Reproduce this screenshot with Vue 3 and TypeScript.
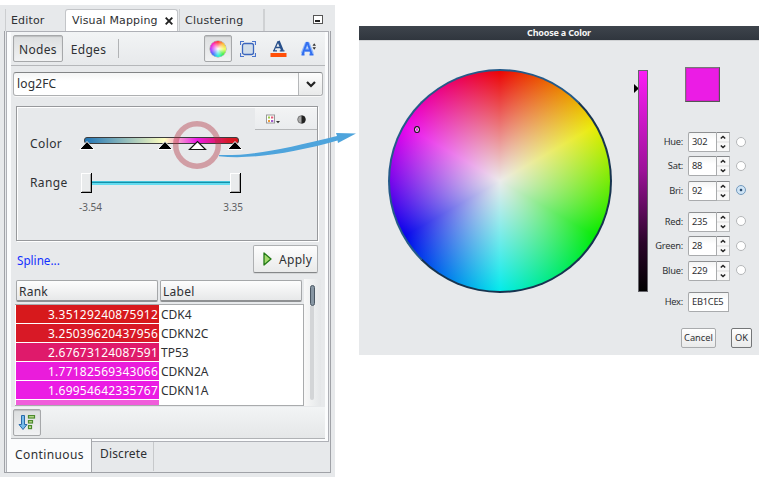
<script setup lang="ts">
import { ref } from 'vue'

interface Row { rank: string; label: string; color: string }
interface Channel { name: string; value: number; gap?: boolean }

const tabs = ['Editor', 'Visual Mapping', 'Clustering']
const activeTab = ref('Visual Mapping')
const column = ref('log2FC')
const selected = ref('Bri')

const rows: Row[] = [
  { rank: '3.35129240875912', label: 'CDK4', color: '#d7191c' },
  { rank: '3.25039620437956', label: 'CDKN2C', color: '#d81926' },
  { rank: '2.67673124087591', label: 'TP53', color: '#df1a6b' },
  { rank: '1.77182569343066', label: 'CDKN2A', color: '#ea1cdb' },
  { rank: '1.69954642335767', label: 'CDKN1A', color: '#eb1ce4' },
  { rank: '', label: '', color: '#f05edb' },
]

const channels: Channel[] = [
  { name: 'Hue', value: 302 },
  { name: 'Sat', value: 88 },
  { name: 'Bri', value: 92 },
  { name: 'Red', value: 235, gap: true },
  { name: 'Green', value: 28 },
  { name: 'Blue', value: 229 },
]
</script>

<template>
  <div class="page">
    <section class="window">
      <nav class="tabs">
        <div v-for="t in tabs" :key="t" class="tab" :class="[t.split(' ')[0].toLowerCase(), { active: t === activeTab }]" @click="activeTab = t">
          <span>{{ t }}</span>
          <svg v-if="t === activeTab" width="8" height="8" viewBox="0 0 8 8"><path d="M.7.7L7.300 7.300M7.300.7L.7 7.300" stroke="#222" stroke-width="1.900" /></svg>
        </div>
        <svg class="minimize" width="10" height="9" viewBox="0 0 10 9"><rect x=".5" y=".5" width="9" height="8" fill="#fff" stroke="#555" /><rect x="2" y="5" width="5" height="2" fill="#222" /></svg>
      </nav>
      <div class="frame">
        <div class="panel">
          <header class="toolbar">
            <button class="tool text pressed nodes">Nodes</button>
            <button class="tool text edges">Edges</button>
            <i class="sep"></i>
            <div class="icons">
              <button class="tool pressed"><i class="mini-wheel"></i></button>
              <button class="tool">
                <svg width="16" height="16" viewBox="0 0 16 16">
                  <rect x="2.5" y="2.5" width="11" height="11" rx="2" fill="#d2deea" stroke="#3b66bd" stroke-width="1.3" />
                  <path d="M.5 4V.5H4M12 .5h3.500V4M15.500 12v3.500H12M4 15.500H.5V12" fill="none" stroke="#4a75cd" stroke-width="1.2" />
                </svg>
              </button>
              <button class="tool">
                <svg width="17" height="17" viewBox="0 0 17 17">
                  <path d="M4 10.500L8 1.500M6 7.500H11M3 10.800h4M9.800 10.800h4.700" fill="none" stroke="#28508b" stroke-width="1.300" /><path d="M8.500 1l4 9.800" stroke="#28508b" stroke-width="2.500" />
                  <rect x=".5" y="13" width="16" height="4" fill="#ff4f08" />
                </svg>
              </button>
              <button class="tool">
                <svg width="17" height="16" viewBox="0 0 17 16">
                  <path d="M2.500 12.500L6.500 2.500h1.500l4 10M4.500 9h6.500" fill="none" stroke="#8eb7fb" stroke-width="3.500" stroke-linejoin="round" />
                  <path d="M1.500 13.500h3M2.700 13L6.800 2h.8l4 11M9.500 13.500h4M5 9.500h5" fill="none" stroke="#326ff0" stroke-width="1.900" />
                  <path d="M12.500 4.800h3.500L14.200 2.300zM12.500 6.200h3.500l-1.800 2.500z" fill="#333" />
                </svg>
              </button>
            </div>
          </header>

          <div class="content">
            <div class="combo">
              <span>{{ column }}</span>
              <b><svg width="10" height="7" viewBox="0 0 10 7"><path d="M1 1l4 4 4-4" fill="none" stroke="#222" stroke-width="2.200" /></svg></b>
            </div>

            <div class="mapping">
              <div class="mini-bar">
                <svg width="15" height="11" viewBox="0 0 15 11">
                  <rect x=".5" y="1" width="8" height="8" fill="#fff" stroke="#999" />
                  <rect x="2" y="2.500" width="2" height="2" fill="#9c4" /><rect x="5" y="2.500" width="2.300" height="2" fill="#e45a78" />
                  <rect x="2" y="6" width="2" height="2" fill="#ed9a3c" /><rect x="5" y="6" width="2.300" height="2" fill="#a35dce" />
                  <path d="M10 7h4L12 9.300z" fill="#333" />
                </svg>
                <svg width="9" height="9" viewBox="0 0 9 9"><circle cx="4.500" cy="4.500" r="3.800" fill="#aaa" stroke="#777" /><path d="M4.500.5a4 4 0 0 1 0 8z" fill="#222" /></svg>
              </div>
              <div class="line color-line">
                <label>Color</label>
                <svg width="170" height="20" viewBox="78 132 170 20">
                  <defs>
                    <linearGradient id="scale"><stop offset="0" stop-color="#1f74b6" /><stop offset=".52" stop-color="#ffffbf" /><stop offset=".73" stop-color="#eb1ce5" /><stop offset=".93" stop-color="#d7192c" /><stop offset="1" stop-color="#d7191c" /></linearGradient>
                  </defs>
                  <rect x="84.500" y="137.500" width="154" height="6" rx="2.500" fill="url(#scale)" stroke="#3d3d3d" />
                  <g fill="#000" stroke="#fff">
                    <path d="M79.500 149.500h15L87 141.500z" /><path d="M157.500 149.500h15L165 141.500z" /><path d="M227.500 149.500h15L235 141.500z" />
                  </g>
                  <path d="M189.500 149.500h16L197.500 141.500z" fill="#fff" stroke="#111" stroke-width="1.200" />
                </svg>
              </div>
              <div class="line range-line">
                <label>Range</label>
                <svg width="170" height="24" viewBox="78 171 170 24" shape-rendering="crispEdges">
                  <rect x="92" y="181" width="138" height="4" fill="#63dcf0" /><rect x="92" y="182" width="138" height="1" fill="#168fa8" /><rect x="92" y="181" width="138" height="1" fill="#45c5dc" />
                  <g v-for="x in [81, 230]" :key="x">
                    <rect :x="x" y="173" width="11" height="20" fill="#000" /><rect :x="x" y="173" width="10" height="19" fill="#fff" /><rect :x="x + 1" y="174" width="9" height="18" fill="#aaa" /><rect :x="x + 1" y="174" width="8" height="17" fill="#e9ebec" />
                  </g>
                </svg>
              </div>
              <div class="limits"><span>-3.54</span><span>3.35</span></div>
              <svg class="ring" width="50" height="50" viewBox="0 0 50 50"><circle cx="25" cy="25" r="21.300" fill="none" stroke="#b22d3c" stroke-opacity=".4" stroke-width="5.500" /></svg>
            </div>

            <div class="actions">
              <a>Spline...</a>
              <button class="apply">
                <svg width="9" height="14" viewBox="0 0 9 14"><path d="M1 1v12l7-6z" fill="#a4d96e" stroke="#237a16" stroke-width="1.300" stroke-linejoin="round" /></svg>
                <span>Apply</span>
              </button>
            </div>

            <div class="table-area">
              <div class="table">
                <div class="thead"><div>Rank</div><div>Label</div></div>
                <div class="tbody">
                  <div v-for="(r, i) in rows" :key="i" class="row">
                    <span class="rank" :style="{ background: r.color }">{{ r.rank }}</span><span class="name">{{ r.label }}</span>
                  </div>
                </div>
              </div>
              <div class="scroll"><i></i></div>
            </div>
          </div>

          <footer class="bottom-bar">
            <button class="tool pressed sort">
              <svg width="18" height="18" viewBox="0 0 18 18">
                <path d="M3.500 1.500h3v9h2.500L5 15.500 1 10.500h2.500z" fill="#76bce9" stroke="#286aaa" stroke-linejoin="round" />
                <g fill="#c9e59b" stroke="#4b8a2d" stroke-width="1.200"><rect x="10.500" y="1.600" width="6" height="2.400" /><rect x="10.500" y="6.600" width="4" height="2.400" /><rect x="10.500" y="11.600" width="3" height="3" /></g>
              </svg>
            </button>
          </footer>
        </div>
        <div class="bottom-tabs"><div class="current">Continuous</div><div class="other">Discrete</div></div>
      </div>
    </section>

    <section class="dialog">
      <h1>Choose a Color</h1>
      <div class="chooser">
        <div class="wheel"><i class="cursor"></i></div>
        <div class="brightness">
          <svg width="5" height="9" viewBox="0 0 5 9"><path d="M0 0v9l4.800-4.500z" fill="#000" /></svg>
          <i></i>
        </div>
        <div class="side">
          <div class="swatch"></div>
          <div v-for="c in channels" :key="c.name" class="channel" :class="{ gap: c.gap }">
            <label>{{ c.name }}:</label>
            <span class="value">{{ c.value }}</span>
            <span class="spin">
              <svg width="12" height="20" viewBox="0 0 12 20"><path d="M0 10h12" stroke="#ddd" /><path d="M3.800 6.500L6 4.500l2.200 2M3.800 13.500L6 15.500l2.200-2" fill="none" stroke="#222" stroke-width="1.500" /></svg>
            </span>
            <i class="radio" :class="{ on: c.name === selected }" @click="selected = c.name"></i>
          </div>
          <div class="channel hex"><label>Hex:</label><span class="value">EB1CE5</span></div>
          <div class="buttons"><button class="cancel">Cancel</button><button class="ok">OK</button></div>
        </div>
      </div>
    </section>

    <svg class="arrow" width="144" height="34" viewBox="216 128 144 34">
      <path d="M219 155C250 156 285 149 337 136L336 133 356 133.500 338 143 337.500 140.500C295 152.500 251 160 219 156.200z" fill="#4ea4dc" />
    </svg>
  </div>
</template>

<style>
body { background: #fff; }
</style>

<style scoped>
* { box-sizing: border-box; }
.page { position: relative; display: flex; width: 765px; height: 477px; overflow: hidden; background: #fff; color: #2e3033; font: 12px/16px "Noto Sans", "Open Sans", sans-serif; }
button { font: inherit; color: inherit; padding: 0; margin: 0; border: 0; background: none; }
svg { display: block; flex: none; }
.window { flex: none; width: 335px; height: 472px; margin-top: 5px; padding: 4px; background: #e7e9eb; }
.tabs { display: flex; height: 22px; font: 11px/22px "DejaVu Sans", sans-serif; letter-spacing: .15px; padding-left: 1px; }
.tab { display: flex; align-items: center; height: 22px; padding-left: 5px; border-left: 1px solid #ccced0; white-space: nowrap; }
.tab span { height: 22px; line-height: 24px; }
.tab.editor { width: 60px; }
.tab.visual { width: 113px; padding-left: 6px; justify-content: space-between; padding-right: 4px; background: #fff; border: 1px solid #c3c5c8; border-bottom: 0; border-radius: 3px 3px 0 0; }
.tab.visual span { height: 21px; line-height: 21px; }
.tab.clustering { width: 86px; margin-left: 1px; border-right: 2px solid #cfd1d3; letter-spacing: .25px; }
.minimize { margin: 6px 0 0 48px; }
.frame { height: 442px; border: 1px solid #a0a2a7; border-top: 0; padding: 0 1px; }
.panel { height: 411px; border: 1px solid #aeb0b6; padding: 0 3px 2px 4px; background: #fbfcfd; }
.toolbar { display: flex; align-items: center; height: 34px; padding: 0 8px 0 2px; border-bottom: 1px solid #b5b7ba; background: linear-gradient(#f2f4f5, #e7e9eb); }
.tool { display: flex; align-items: center; justify-content: center; width: 28px; height: 27px; }
.pressed { border: 1px solid #a6a8aa; border-radius: 2px; background: linear-gradient(#dcdedf, #f1f2f3); box-shadow: inset 0 1px 1px #bcbebf; }
.tool.nodes { width: 50px; }
.tool.edges { width: 49px; padding-left: 2px; }
.tool.text { font-size: 12px; letter-spacing: .3px; padding-top: 2px; }
.sep { width: 1px; height: 19px; margin-left: 6px; background: #b1b3b5; }
.icons { display: flex; gap: 2px; margin-left: auto; margin-right: -5px; }
.mini-wheel { width: 16px; height: 16px; border-radius: 50%; background: radial-gradient(circle, #fff 0, #fff0 65%), conic-gradient(#f33, #fb3, #ef5, #4e4, #2ed, #46f, #b3f, #f2b, #f33); box-shadow: 0 0 0 .5px #999; }
.content { height: 341px; padding: 6px 7px 0 5px; background: #e7e9eb; }
.combo { display: flex; height: 24px; margin: 0 -5px 0 -3px; border: 1px solid #aeb0b2; border-top-color: #828486; border-radius: 3px; background: linear-gradient(#f4f5f5, #fff 35%); line-height: 22px; box-shadow: 0 1px #f8f8f8; }
.combo span { flex: 1; padding-left: 3px; letter-spacing: .15px; }
.combo b { width: 24px; display: flex; align-items: center; justify-content: center; border-left: 1px solid #b5b7b9; background: linear-gradient(#fdfdfd, #e9eaea); border-radius: 0 3px 3px 0; }
.mapping { position: relative; height: 135px; margin-top: 10px; border: 1px solid #97999c; box-shadow: inset 1px 1px #fff, 1px 1px #fff; }
.mini-bar { display: flex; align-items: center; gap: 16px; width: 62px; height: 22px; margin: 1px 0 0 auto; padding: 2px 0 0 11px; border-bottom: 1px solid #b5b7b9; background: linear-gradient(#f2f3f4, #eaecee); }
.line { display: flex; align-items: center; padding-left: 13px; }
.line label { width: 48px; letter-spacing: .4px; }
.color-line { height: 20px; margin-top: 2px; }
.color-line label { padding-top: 3px; }
.range-line { height: 24px; margin-top: 19px; }
.limits { display: flex; justify-content: space-between; width: 164px; margin: 4px 0 0 62px; font-size: 10px; color: #5f6163; }
.ring { position: absolute; left: 155px; top: 13px; }
.actions { display: flex; justify-content: space-between; align-items: center; height: 28px; margin-top: 4px; padding: 0 0 0 1px; }
.actions a { color: #1330ff; font-size: 11.700px; padding-top: 1px; }
.apply { display: flex; align-items: center; gap: 7px; width: 65px; height: 28px; padding-left: 9px; border: 1px solid #aeb0b2; border-bottom-color: #858789; border-radius: 2px; background: linear-gradient(#fdfdfd, #e9eaea); box-shadow: 0 1px #d4d6d7; }
.apply span { letter-spacing: .3px; padding-top: 1px; }
.table-area { display: flex; justify-content: space-between; margin: 6px -3px 0 -1px; height: 127px; }
.table { width: 290px; height: 127px; overflow: hidden; }
.thead { display: grid; grid-template-columns: 142px 142px; gap: 2px; height: 25px; padding: 1px 0 1px 1px; }
.thead div { height: 22px; padding-left: 2px; line-height: 21px; border: 1px solid #a5a7a9; border-bottom: 2px solid #8e9092; border-radius: 2px; background: linear-gradient(#fdfdfd, #e7e8e9); letter-spacing: .25px; }
.tbody { height: 102px; overflow: hidden; border: 1px solid #a9abad; border-left: 0; background: #fff; }
.row { display: grid; grid-template-columns: 143px 1fr; height: 19px; line-height: 19px; padding-bottom: 1px; padding-left: 1px; }
.row span { height: 18px; overflow: hidden; }
.rank { color: #fff; text-align: right; letter-spacing: .24px; padding-right: 1px; }
.name { padding-left: 2px; }
.scroll { width: 17px; flex: none; height: 127px; padding: 6px 0 0 6px; background: linear-gradient(90deg, #f8f8f8, #eceeef 60%, #e4e6e8); }
.scroll::after { content: ""; display: block; width: 4px; height: 94px; background: #d3d5d7; border-radius: 0 0 2px 2px; }
.scroll i { display: block; width: 5px; height: 21px; border: 1px solid #4b5864; border-radius: 3px; background: #8796a3; }
.bottom-bar { display: flex; align-items: center; height: 32px; padding-left: 2px; border-bottom: 1px solid #b0b2b5; background: linear-gradient(#f2f4f5, #e5e7e8); }
.bottom-tabs { display: flex; align-items: flex-start; height: 30px; }
.current { position: relative; width: 86px; height: 33px; margin-top: -3px; padding: 0 0 0 8px; line-height: 32px; background: #fbfcfd; border-left: 1px solid #aeb0b6; border-right: 1px solid #a5a7ab; letter-spacing: .4px; }
.other { width: 62px; height: 29px; padding-left: 8px; line-height: 24px; border-right: 1px solid #c7c9cb; letter-spacing: .15px; }
.dialog { flex: none; width: 400px; height: 329px; margin: 26px 0 0 24px; background: #e7e9eb; font-size: 9.300px; letter-spacing: -.25px; }
.dialog h1 { height: 15px; margin: 0; background: linear-gradient(#3e444c, #30363e); border-bottom: 1px solid #cfd1d3; color: #f4f4f4; font-size: 9px; line-height: 14px; font-weight: 700; text-align: center; letter-spacing: -.2px; }
.chooser { display: flex; height: 314px; padding: 28px 6px 0 29px; }
.wheel { position: relative; flex: none; width: 224px; height: 224px; border: 2px solid #173a5c; border-radius: 50%; background: radial-gradient(circle closest-side, #ebebeb, #ebebeb00 100%), conic-gradient(#eb0000, #ebeb00 60deg, #00eb00 120deg, #00ebeb 180deg, #0000eb 240deg, #eb00eb 300deg, #eb0000); background-origin: border-box; border-color: #245a89 #173450 #173450 #245a89; }
.cursor { position: absolute; left: 24px; top: 55px; width: 6px; height: 7px; border: 1px solid #151515; border-radius: 50%; box-shadow: inset 0 0 0 1px #eee; }
.brightness { display: flex; width: 16px; margin: 1px 0 0 22px; }
.brightness svg { margin-top: 14px; }
.brightness i { width: 10px; height: 222px; margin-left: -1px; border: 1px solid #65646a; background: linear-gradient(#fb1df5, #9d1299 45%, #2b052a 78%, #000); flex: none; }
.side { margin-left: 5px; flex: 1; }
.swatch { width: 35px; height: 35px; margin: -2px 0 30px 30px; border: 1px solid #777; border-right-color: #555; border-bottom-color: #555; background: #eb1ce5; box-shadow: inset 0 0 0 1px #d321c9; }
.channel { display: flex; align-items: center; height: 20px; margin-bottom: 4.400px; }
.channel.gap { margin-top: 11px; }
.channel label { width: 28px; text-align: right; margin-right: 5px; display: flex; justify-content: flex-end; }
.value { width: 29px; height: 20px; padding-left: 3px; line-height: 18px; border: 1px solid #a9abad; border-top-color: #8e9092; border-radius: 2px 0 0 2px; background: linear-gradient(#f3f4f4, #fff 40%); }
.spin { width: 13px; height: 20px; border: 1px solid #babcbd; border-top-color: #85878a; border-left: 0; background: #f8f8f8; }
.spin svg { margin-top: -1px; }
.radio { width: 10px; height: 10px; margin: -1px 0 0 6px; border: 1px solid #b5b7b9; border-radius: 50%; background: #fff; }
.radio.on { border-color: #739abe; background: radial-gradient(circle, #294c70 0 1px, #cfe4f5 1.700px); }
.channel.hex { margin-top: 11px; }
.hex .value { width: 41px; }
.buttons { display: flex; gap: 15px; margin: 16px 0 0 26px; }
.buttons button { height: 20px; border: 1px solid #a9abad; border-radius: 2px; background: linear-gradient(#fff, #e9eaea); line-height: 18px; }
.buttons .cancel { width: 35px; }
.buttons .ok { width: 21px; border-color: #747678; }
.arrow { position: absolute; left: 216px; top: 128px; pointer-events: none; }
</style>
